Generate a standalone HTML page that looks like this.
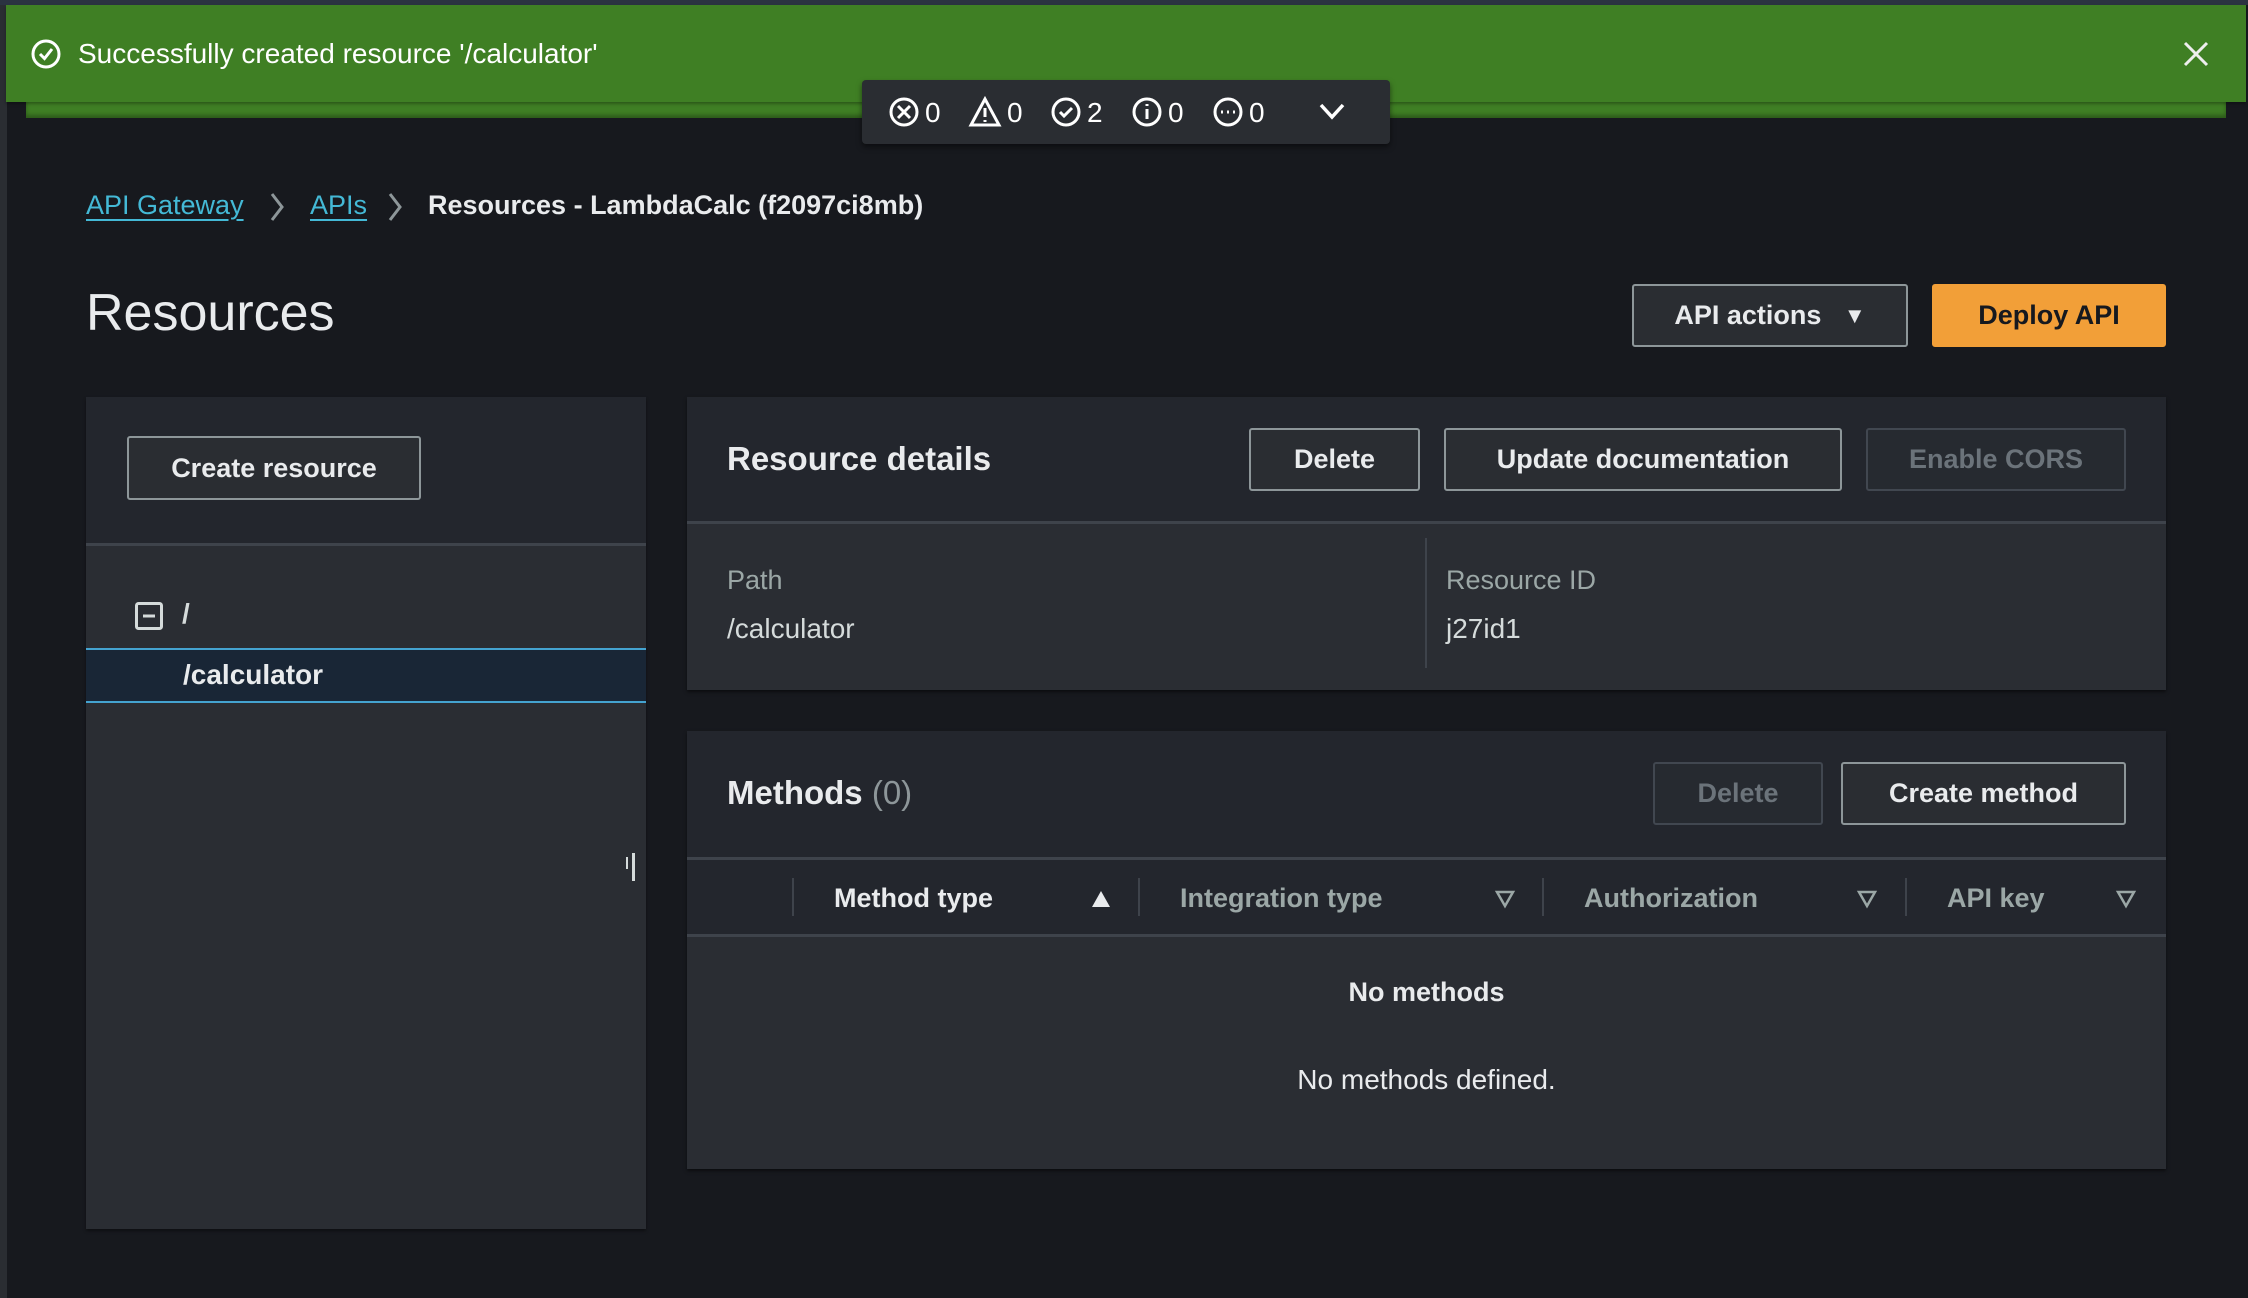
<!DOCTYPE html>
<html><head><meta charset="utf-8"><style>
*{box-sizing:border-box;margin:0;padding:0}
body{width:2248px;height:1298px;background:#17191e;font-family:"Liberation Sans",sans-serif;color:#d5dbdb;position:relative;overflow:hidden}
.abs{position:absolute}
.btn{position:absolute;border:2px solid #8d9699;border-radius:3px;background:#2a2d32;color:#e9ebed;font-weight:bold;font-size:27px;display:flex;align-items:center;justify-content:center}
.dis{border-color:#414750;color:#6b737a;background:#262a30}
.t{position:absolute;white-space:nowrap}
</style></head><body>
<div class="abs" style="left:0;top:0;width:2248px;height:5px;background:#2b3241"></div>
<div class="abs" style="left:0;top:5px;width:7px;height:1293px;background:#2a2d32"></div>
<div class="abs" style="left:26px;top:90px;width:2200px;height:28px;background:#3f7f24;box-shadow:0 -3px 4px rgba(0,0,0,.3) inset"></div>
<div class="abs" style="left:6px;top:5px;width:2240px;height:97px;background:#3f7f24;box-shadow:0 2px 3px rgba(0,0,0,.3)"></div>
<svg class="abs" style="left:30px;top:38px" width="32" height="32" viewBox="0 0 32 32"><circle cx="16" cy="16" r="13" fill="none" stroke="#fff" stroke-width="3"/><path d="M10 16l4.5 4.5L22 11" fill="none" stroke="#fff" stroke-width="3"/></svg>
<div class="t" style="left:78px;top:38px;font-size:28px;color:#fff">Successfully created resource '/calculator'</div>
<svg class="abs" style="left:2182px;top:40px" width="28" height="28" viewBox="0 0 28 28"><path d="M3 3L25 25M25 3L3 25" stroke="#eee" stroke-width="3"/></svg>
<div class="abs" style="left:862px;top:80px;width:528px;height:64px;background:#2a2d32;border-radius:4px;box-shadow:0 3px 6px rgba(0,0,0,.5)"></div>
<svg class="abs" style="left:885px;top:95px" width="460" height="34" viewBox="0 0 460 34" font-family="Liberation Sans" font-size="28" fill="#fff">
<circle cx="19" cy="17" r="13" fill="none" stroke="#fff" stroke-width="3"/><path d="M13 11l12 12M25 11l-12 12" stroke="#fff" stroke-width="3"/><text x="40" y="27">0</text>
<path d="M100 4L86 30h28z" fill="none" stroke="#fff" stroke-width="3"/><path d="M100 13v9M100 25v2" stroke="#fff" stroke-width="3"/><text x="122" y="27">0</text>
<circle cx="181" cy="17" r="13" fill="none" stroke="#fff" stroke-width="3"/><path d="M175 17l4 4l8-8" fill="none" stroke="#fff" stroke-width="3"/><text x="202" y="27">2</text>
<circle cx="262" cy="17" r="13" fill="none" stroke="#fff" stroke-width="3"/><path d="M262 14v10M262 9v2" stroke="#fff" stroke-width="3"/><text x="283" y="27">0</text>
<circle cx="343" cy="17" r="13" fill="none" stroke="#fff" stroke-width="3"/><path d="M336 17h2M342 17h2M348 17h2" stroke="#fff" stroke-width="3"/><text x="364" y="27">0</text>
<path d="M436 10l11 12l11-12" fill="none" stroke="#fff" stroke-width="3.5"/></svg>
<div class="t" style="left:86px;top:190px;font-size:27px;color:#44b9d6;text-decoration:underline;text-underline-offset:5px">API Gateway</div>
<svg class="abs" style="left:268px;top:192px" width="18" height="30"><path d="M4 2l10 13l-10 13" fill="none" stroke="#8d9699" stroke-width="3"/></svg>
<div class="t" style="left:310px;top:190px;font-size:27px;color:#44b9d6;text-decoration:underline;text-underline-offset:5px">APIs</div>
<svg class="abs" style="left:386px;top:192px" width="18" height="30"><path d="M4 2l10 13l-10 13" fill="none" stroke="#8d9699" stroke-width="3"/></svg>
<div class="t" style="left:428px;top:190px;font-size:27px;color:#e9ebed;font-weight:bold">Resources - LambdaCalc (f2097ci8mb)</div>
<div class="t" style="left:86px;top:283px;font-size:52px;color:#e9ebed">Resources</div>
<div class="btn" style="left:1632px;top:284px;width:276px;height:63px">API actions&nbsp;&nbsp;&nbsp;<span style="font-size:22px">▼</span></div>
<div class="btn" style="left:1932px;top:284px;width:234px;height:63px;background:#f29f38;border-color:#f29f38;color:#16191f">Deploy API</div>
<!-- left panel -->
<div class="abs" style="left:86px;top:397px;width:560px;height:832px;background:#2a2d33;box-shadow:0 2px 3px rgba(0,0,0,.4)"></div>
<div class="abs" style="left:86px;top:397px;width:560px;height:147px;background:#23262d"></div>
<div class="abs" style="left:86px;top:543px;width:560px;height:3px;background:#3e434b"></div>
<div class="btn" style="left:127px;top:436px;width:294px;height:64px">Create resource</div>
<svg class="abs" style="left:134px;top:601px" width="30" height="30"><rect x="2.5" y="2.5" width="25" height="25" rx="2" fill="none" stroke="#d5dbdb" stroke-width="3"/><path d="M9 15h12" stroke="#d5dbdb" stroke-width="3"/></svg>
<div class="t" style="left:182px;top:598px;font-size:28px;font-weight:bold;color:#d5dbdb">/</div>
<div class="abs" style="left:86px;top:648px;width:560px;height:55px;background:#192636;border-top:2px solid #44a3d0;border-bottom:2px solid #44a3d0"></div>
<div class="t" style="left:183px;top:659px;font-size:28px;font-weight:bold;color:#e9ebed">/calculator</div>
<div class="abs" style="left:626px;top:857px;width:2px;height:12px;background:#d5dbdb"></div>
<div class="abs" style="left:632px;top:853px;width:3px;height:28px;background:#d5dbdb"></div>
<!-- resource details -->
<div class="abs" style="left:687px;top:397px;width:1479px;height:293px;background:#2a2d33;box-shadow:0 2px 3px rgba(0,0,0,.5)"></div>
<div class="abs" style="left:687px;top:397px;width:1479px;height:127px;background:#23262d;border-bottom:3px solid #3e434b"></div>
<div class="t" style="left:727px;top:440px;font-size:33px;font-weight:bold;color:#e9ebed">Resource details</div>
<div class="btn" style="left:1249px;top:428px;width:171px;height:63px">Delete</div>
<div class="btn" style="left:1444px;top:428px;width:398px;height:63px">Update documentation</div>
<div class="btn dis" style="left:1866px;top:428px;width:260px;height:63px">Enable CORS</div>
<div class="t" style="left:727px;top:565px;font-size:27px;color:#9ba7a6">Path</div>
<div class="t" style="left:727px;top:613px;font-size:28px;color:#d5dbdb">/calculator</div>
<div class="abs" style="left:1425px;top:538px;width:2px;height:130px;background:#3e434b"></div>
<div class="t" style="left:1446px;top:565px;font-size:27px;color:#9ba7a6">Resource ID</div>
<div class="t" style="left:1446px;top:613px;font-size:28px;color:#d5dbdb">j27id1</div>
<!-- methods -->
<div class="abs" style="left:687px;top:731px;width:1479px;height:438px;background:#2a2d33;box-shadow:0 2px 3px rgba(0,0,0,.5)"></div>
<div class="abs" style="left:687px;top:731px;width:1479px;height:205px;background:#23262d"></div>
<div class="abs" style="left:687px;top:857px;width:1479px;height:3px;background:#3e434b"></div>
<div class="abs" style="left:687px;top:934px;width:1479px;height:3px;background:#3e434b"></div>
<div class="t" style="left:727px;top:774px;font-size:33px;font-weight:bold;color:#e9ebed">Methods <span style="font-weight:normal;color:#8d9699">(0)</span></div>
<div class="btn dis" style="left:1653px;top:762px;width:170px;height:63px">Delete</div>
<div class="btn" style="left:1841px;top:762px;width:285px;height:63px">Create method</div>
<div class="abs" style="left:792px;top:878px;width:2px;height:38px;background:#3e434b"></div>
<div class="abs" style="left:1138px;top:878px;width:2px;height:38px;background:#3e434b"></div>
<div class="abs" style="left:1542px;top:878px;width:2px;height:38px;background:#3e434b"></div>
<div class="abs" style="left:1905px;top:878px;width:2px;height:38px;background:#3e434b"></div>
<div class="t" style="left:834px;top:883px;font-size:27px;font-weight:bold;color:#e9ebed">Method type</div>
<svg class="abs" style="left:1090px;top:889px" width="22" height="20"><path d="M11 2L20 18H2z" fill="#e9ebed"/></svg>
<div class="t" style="left:1180px;top:883px;font-size:27px;font-weight:bold;color:#9ba7a6">Integration type</div>
<svg class="abs" style="left:1494px;top:889px" width="22" height="20"><path d="M3 3h16L11 17z" fill="none" stroke="#9ba7a6" stroke-width="2.5"/></svg>
<div class="t" style="left:1584px;top:883px;font-size:27px;font-weight:bold;color:#9ba7a6">Authorization</div>
<svg class="abs" style="left:1856px;top:889px" width="22" height="20"><path d="M3 3h16L11 17z" fill="none" stroke="#9ba7a6" stroke-width="2.5"/></svg>
<div class="t" style="left:1947px;top:883px;font-size:27px;font-weight:bold;color:#9ba7a6">API key</div>
<svg class="abs" style="left:2115px;top:889px" width="22" height="20"><path d="M3 3h16L11 17z" fill="none" stroke="#9ba7a6" stroke-width="2.5"/></svg>
<div class="t" style="left:687px;width:1479px;text-align:center;top:977px;font-size:27px;font-weight:bold;color:#e9ebed">No methods</div>
<div class="t" style="left:687px;width:1479px;text-align:center;top:1064px;font-size:28px;color:#e9ebed">No methods defined.</div>
</body></html>
